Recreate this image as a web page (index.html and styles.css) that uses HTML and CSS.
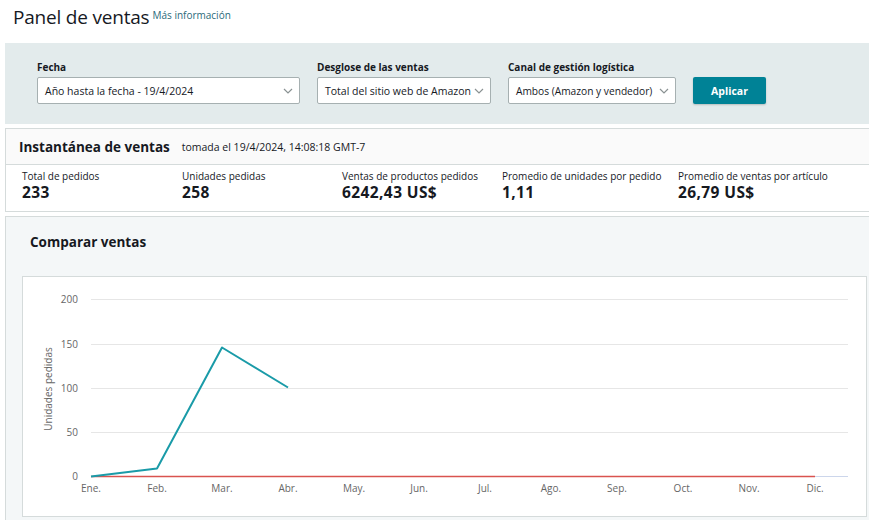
FILE: index.html
```html
<!DOCTYPE html>
<html lang="es">
<head>
<meta charset="utf-8">
<title>Panel de ventas</title>
<link rel="stylesheet" href="styles.css">
</head>
<body>
<div class="page">
  <header class="page-head">
    <h1 class="page-title">Panel de ventas</h1>
    <a class="more-link" href="#">Más información</a>
  </header>

  <section class="filters">
    <div class="field field-date">
      <label class="field-label">Fecha</label>
      <div class="select">
        <span>Año hasta la fecha - 19/4/2024</span>
        <svg class="chev" width="10" height="6" viewBox="0 0 10 6"><path d="M1 1l4 4 4-4" fill="none" stroke="#8a9293" stroke-width="1.2"/></svg>
      </div>
    </div>
    <div class="field field-breakdown">
      <label class="field-label">Desglose de las ventas</label>
      <div class="select">
        <span>Total del sitio web de Amazon</span>
        <svg class="chev" width="10" height="6" viewBox="0 0 10 6"><path d="M1 1l4 4 4-4" fill="none" stroke="#8a9293" stroke-width="1.2"/></svg>
      </div>
    </div>
    <div class="field field-channel">
      <label class="field-label">Canal de gestión logística</label>
      <div class="select">
        <span>Ambos (Amazon y vendedor)</span>
        <svg class="chev" width="10" height="6" viewBox="0 0 10 6"><path d="M1 1l4 4 4-4" fill="none" stroke="#8a9293" stroke-width="1.2"/></svg>
      </div>
    </div>
    <button class="apply">Aplicar</button>
  </section>

  <section class="snapshot">
    <div class="snap-head">
      <h2 class="snap-title">Instantánea de ventas</h2>
      <span class="snap-time">tomada el 19/4/2024, 14:08:18 GMT-7</span>
    </div>
    <div class="metrics">
      <div class="metric"><div class="m-label">Total de pedidos</div><div class="m-value">233</div></div>
      <div class="metric"><div class="m-label">Unidades pedidas</div><div class="m-value">258</div></div>
      <div class="metric"><div class="m-label">Ventas de productos pedidos</div><div class="m-value">6242,43 US$</div></div>
      <div class="metric"><div class="m-label">Promedio de unidades por pedido</div><div class="m-value">1,11</div></div>
      <div class="metric"><div class="m-label">Promedio de ventas por artículo</div><div class="m-value">26,79 US$</div></div>
    </div>
  </section>

  <section class="compare">
    <h2 class="compare-title">Comparar ventas</h2>
    <div class="chart-box">
      <svg class="chart" width="843" height="239" viewBox="23 277 843 239">
        <g class="grid" stroke="#e6e6e6" stroke-width="1">
          <line x1="91" y1="299.5" x2="848" y2="299.5"/>
          <line x1="91" y1="344.5" x2="848" y2="344.5"/>
          <line x1="91" y1="388.5" x2="848" y2="388.5"/>
          <line x1="91" y1="432.5" x2="848" y2="432.5"/>
          <line x1="91" y1="476.5" x2="848" y2="476.5" stroke="#ccd6eb"/>
        </g>
        <g class="ylab" font-size="10" fill="#666" text-anchor="end">
          <text x="78" y="303">200</text>
          <text x="78" y="348">150</text>
          <text x="78" y="392">100</text>
          <text x="78" y="436">50</text>
          <text x="78" y="480">0</text>
        </g>
        <text class="ytitle" transform="translate(52 389) rotate(-90)" text-anchor="middle" font-size="10" fill="#666">Unidades pedidas</text>
        <g class="xlab" font-size="10" fill="#666" text-anchor="middle">
          <text x="91" y="492">Ene.</text>
          <text x="157" y="492">Feb.</text>
          <text x="222" y="492">Mar.</text>
          <text x="288" y="492">Abr.</text>
          <text x="354" y="492">May.</text>
          <text x="419" y="492">Jun.</text>
          <text x="485" y="492">Jul.</text>
          <text x="551" y="492">Ago.</text>
          <text x="617" y="492">Sep.</text>
          <text x="683" y="492">Oct.</text>
          <text x="749" y="492">Nov.</text>
          <text x="815" y="492">Dic.</text>
        </g>
        <line x1="91" y1="476.5" x2="815" y2="476.5" stroke="#d9534f" stroke-width="1.5"/>
        <polyline points="91,476.5 157,468.5 222,347.5 288,387.5" fill="none" stroke="#1a9ba8" stroke-width="2" stroke-linejoin="round"/>
      </svg>
    </div>
  </section>
</div>
</body>
</html>
```

FILE: styles.css
```css
* { box-sizing: border-box; }
html, body { margin: 0; padding: 0; }
body {
  background: #fff;
  font-family: "Open Sans", "Noto Sans", Arial, sans-serif;
  color: #0f1111;
  overflow: hidden;
  width: 869px;
  height: 520px;
}
.page { width: 869px; }

.page-head {
  height: 43px;
  display: flex;
  align-items: flex-start;
  padding: 3px 0 0 13px;
}
.page-title {
  margin: 0;
  font-weight: 400;
  font-size: 19px;
  line-height: 28px;
  color: #16191f;
  letter-spacing: -0.2px;
}
.more-link {
  font-size: 10px;
  color: #2b6a7a;
  text-decoration: none;
  margin-left: 3px;
  margin-top: 5px;
}

.filters {
  margin-left: 5px;
  margin-right: -20px;
  height: 81px;
  background: #e3ebec;
  display: flex;
  align-items: flex-start;
  padding: 17px 0 0 32px;
}
.field { display: flex; flex-direction: column; margin-right: 17px; }
.field-label {
  font-size: 10px;
  font-weight: 700;
  color: #16191f;
  line-height: 14px;
  margin-bottom: 3px;
}
.select {
  height: 27px;
  background: #fff;
  border: 1px solid #a6b0b1;
  border-radius: 2px;
  display: flex;
  align-items: center;
  justify-content: space-between;
  padding: 0 6px 0 7px;
  font-size: 10.5px;
  color: #16191f;
  white-space: nowrap;
}
.field-date .select { width: 263px; }
.field-breakdown .select { width: 174px; }
.field-channel .select { width: 168px; }
.field-channel .select span { font-size: 10.2px; }
.chev { flex: none; }
.apply {
  margin-top: 17px;
  width: 73px;
  height: 27px;
  background: #008296;
  color: #fff;
  border: none;
  border-radius: 2px;
  font-family: inherit;
  font-size: 10.5px;
  font-weight: 700;
  box-shadow: 0 1px 2px rgba(0,0,0,0.2);
}

.snapshot {
  margin: 4px -20px 0 5px;
  border: 1px solid #d5dbdb;
  background: #fff;
}
.snap-head {
  height: 36px;
  background: #fafafa;
  border-bottom: 1px solid #d5dbdb;
  display: flex;
  align-items: center;
  padding-left: 13px;
}
.snap-title {
  margin: 0;
  font-size: 13.5px;
  font-weight: 700;
  color: #16191f;
}
.snap-time {
  font-size: 10.5px;
  color: #16191f;
  margin-left: 12px;
  margin-top: 1px;
}
.metrics {
  display: grid;
  grid-template-columns: 160px 160px 160px 176px auto;
  padding: 5px 0 0 16px;
  height: 46px;
}
.m-label { font-size: 10px; color: #16191f; line-height: 13px; }
.m-value { font-size: 15.5px; font-weight: 700; color: #16191f; line-height: 18px; letter-spacing: 0.4px; }

.compare {
  margin: 4px -20px 0 5px;
  border: 1px solid #d5dbdb;
  background: #f4f7f8;
  height: 320px;
  padding: 16px 0 0 16px;
}
.compare-title {
  margin: 0 0 0 8px;
  font-size: 13.5px;
  font-weight: 700;
  color: #16191f;
  line-height: 18px;
  height: 43px;
}
.chart-box {
  width: 845px;
  height: 241px;
  background: #fff;
  border: 1px solid #d5dbdb;
}
.chart { display: block; font-family: "Open Sans", Arial, sans-serif; }
```
